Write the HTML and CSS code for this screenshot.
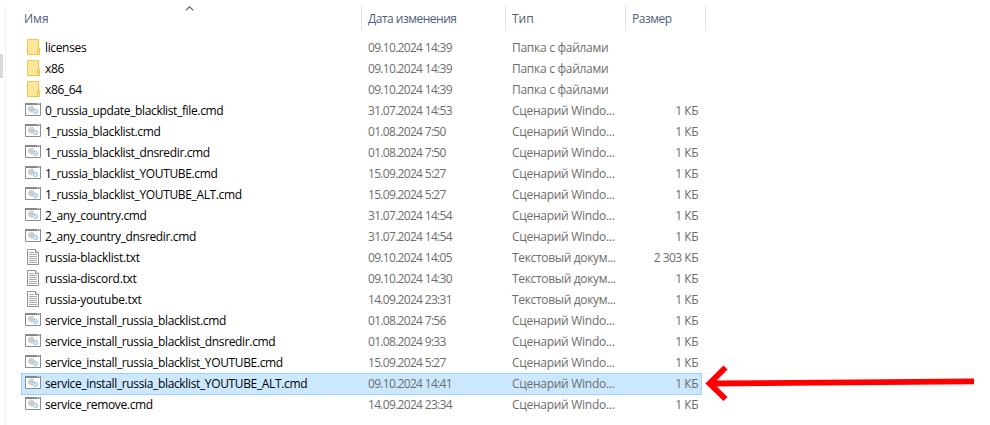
FILE: index.html
```
<!DOCTYPE html>
<html lang="ru">
<head>
<meta charset="utf-8">
<title>Файлы</title>
<link rel="stylesheet" href="styles.css">
</head>
<body>
<svg class="defs" width="0" height="0">
  <symbol id="folder" viewBox="0 0 16 16">
    <path d="M2.500.5h11v15h-11z" fill="#ffe69b" stroke="#ebc850"/>
    <path d="M12.500 9.500h2v6h-2z" fill="#ffe69b" stroke="#e9c545"/>
  </symbol>
  <symbol id="script" viewBox="0 0 16 16">
    <path d="M.5 1.500h15v12H.5z" fill="#fff" stroke="#8b8e91"/>
    <path d="M0 1h16v2H0z" fill="#85898c"/>
    <path d="M12 1.800h1M14 1.800h1" stroke="#fff"/>
    <circle cx="6.300" cy="7" r="2.800" fill="#e8eaeb" stroke="#a0a3a6" stroke-dasharray="1.200 .5"/>
    <circle cx="6.300" cy="7" r="1.100" fill="#fff" stroke="#8f9396" stroke-width=".7"/>
    <circle cx="10.400" cy="9.500" r="2.200" fill="#c5e4f5" stroke="#8bbbd7" stroke-dasharray="1.200 .4"/>
    <circle cx="10.400" cy="9.500" r=".6" fill="#fff"/>
  </symbol>
  <symbol id="text" viewBox="0 0 16 16">
    <path d="M2.500.5h8l3 3v12h-11z" fill="#fff" stroke="#929292"/>
    <path d="M10.500.5v3h3" fill="#eee" stroke="#929292"/>
    <path d="M4 3.500h5M4 5.500h8M4 7.500h8M4 9.500h8M4 11.500h8M4 13.500h8" stroke="#aaa"/>
  </symbol>
</svg>
<main class="window">
  <aside class="gutter"><div class="thumb"></div></aside>
  <section class="pane">
    <header class="head">
      <div class="h name">Имя<svg class="sort" width="9" height="5" viewBox="0 0 9 5"><path d="M.8 4.300 4.500.8l3.700 3.500" fill="none" stroke="#5c5c5c" stroke-width="1.100"/></svg></div>
      <div class="h date">Дата изменения</div>
      <div class="h type">Тип</div>
      <div class="h size">Размер</div>
    </header>
    <div class="rows" id="rows"></div>
  </section>
  <svg class="arrow" width="270" height="40" viewBox="0 0 270 40"><path d="M4 20.500 269 18.300M20.500 4.500 4.500 20.500l16 15.500" fill="none" stroke="#f00" stroke-width="5.800"/></svg>
</main>
<script src="files.js"></script>
</body>
</html>
```
FILE: files.js
```
const files = [
  ["folder", "licenses", "09.10.2024 14:39", ""],
  ["folder", "x86", "09.10.2024 14:39", ""],
  ["folder", "x86_64", "09.10.2024 14:39", ""],
  ["script", "0_russia_update_blacklist_file.cmd", "31.07.2024 14:53", "1 КБ"],
  ["script", "1_russia_blacklist.cmd", "01.08.2024 7:50", "1 КБ"],
  ["script", "1_russia_blacklist_dnsredir.cmd", "01.08.2024 7:50", "1 КБ"],
  ["script", "1_russia_blacklist_YOUTUBE.cmd", "15.09.2024 5:27", "1 КБ"],
  ["script", "1_russia_blacklist_YOUTUBE_ALT.cmd", "15.09.2024 5:27", "1 КБ"],
  ["script", "2_any_country.cmd", "31.07.2024 14:54", "1 КБ"],
  ["script", "2_any_country_dnsredir.cmd", "31.07.2024 14:54", "1 КБ"],
  ["text", "russia-blacklist.txt", "09.10.2024 14:05", "2 303 КБ"],
  ["text", "russia-discord.txt", "09.10.2024 14:30", "1 КБ"],
  ["text", "russia-youtube.txt", "14.09.2024 23:31", "1 КБ"],
  ["script", "service_install_russia_blacklist.cmd", "01.08.2024 7:56", "1 КБ"],
  ["script", "service_install_russia_blacklist_dnsredir.cmd", "01.08.2024 9:33", "1 КБ"],
  ["script", "service_install_russia_blacklist_YOUTUBE.cmd", "15.09.2024 5:27", "1 КБ"],
  ["script", "service_install_russia_blacklist_YOUTUBE_ALT.cmd", "09.10.2024 14:41", "1 КБ"],
  ["script", "service_remove.cmd", "14.09.2024 23:34", "1 КБ"]
];
const types = { folder: "Папка с файлами", script: "Сценарий Windo...", text: "Текстовый докум..." };
const selected = 16;
document.getElementById("rows").innerHTML = files.map(([kind, name, date, size], i) => `
  <div class="row ${kind}${i === selected ? " selected" : ""}">
    <svg class="icon" width="16" height="16"><use href="#${kind}"/></svg>
    <span class="fname">${name}</span>
    <span class="fdate">${date}</span>
    <span class="ftype">${types[kind]}</span>
    <span class="fsize">${size}</span>
  </div>`).join("");
```
FILE: styles.css
```
body { margin: 0; background: #fff; font: 12px/21px "Open Sans", "Noto Sans", sans-serif; color: #000; overflow: hidden; }
.defs { position: absolute; }
.window { display: flex; height: 425px; position: relative; }
.gutter { width: 5px; padding-top: 54px; box-sizing: border-box; }
.thumb { width: 3px; height: 24px; background: #d9d9d9; }
.pane { width: 701px; margin-top: 6px; border-left: 1px solid #f2f2f2; box-sizing: border-box; }
.head { display: flex; height: 25px; line-height: 26px; color: #4c607a; }
.h { border-right: 1px solid #e2e2e2; box-sizing: border-box; padding-left: 6px; white-space: nowrap; }
.h.name { width: 356px; padding-left: 18px; position: relative; }
.h.date { width: 144px; letter-spacing: -.5px; }
.h.type { width: 120px; }
.h.size { width: 80px; letter-spacing: -.5px; }
.sort { position: absolute; left: 179px; top: 0; }
.rows { padding: 6px 0 0 15px; }
.row { display: grid; grid-template-columns: 20px 323px 144px 120px 66px; width: 681px; height: 22px; margin-bottom: -1px; box-sizing: border-box; border: 1px solid transparent; padding-left: 3px; line-height: 20px; color: #6d6d6d; white-space: nowrap; }
.selected { background: #cce8ff; border-color: #99d1ff; }
.icon { margin-top: 1px; }
.fname { color: #000; letter-spacing: -.355px; }
.text .fname { letter-spacing: -.28px; }
.fdate { letter-spacing: -.69px; }
.ftype { letter-spacing: -.28px; }
.text .ftype { letter-spacing: -.33px; }
.fsize { text-align: right; letter-spacing: -.5px; }
.arrow { position: absolute; left: 705px; top: 363px; }
```
